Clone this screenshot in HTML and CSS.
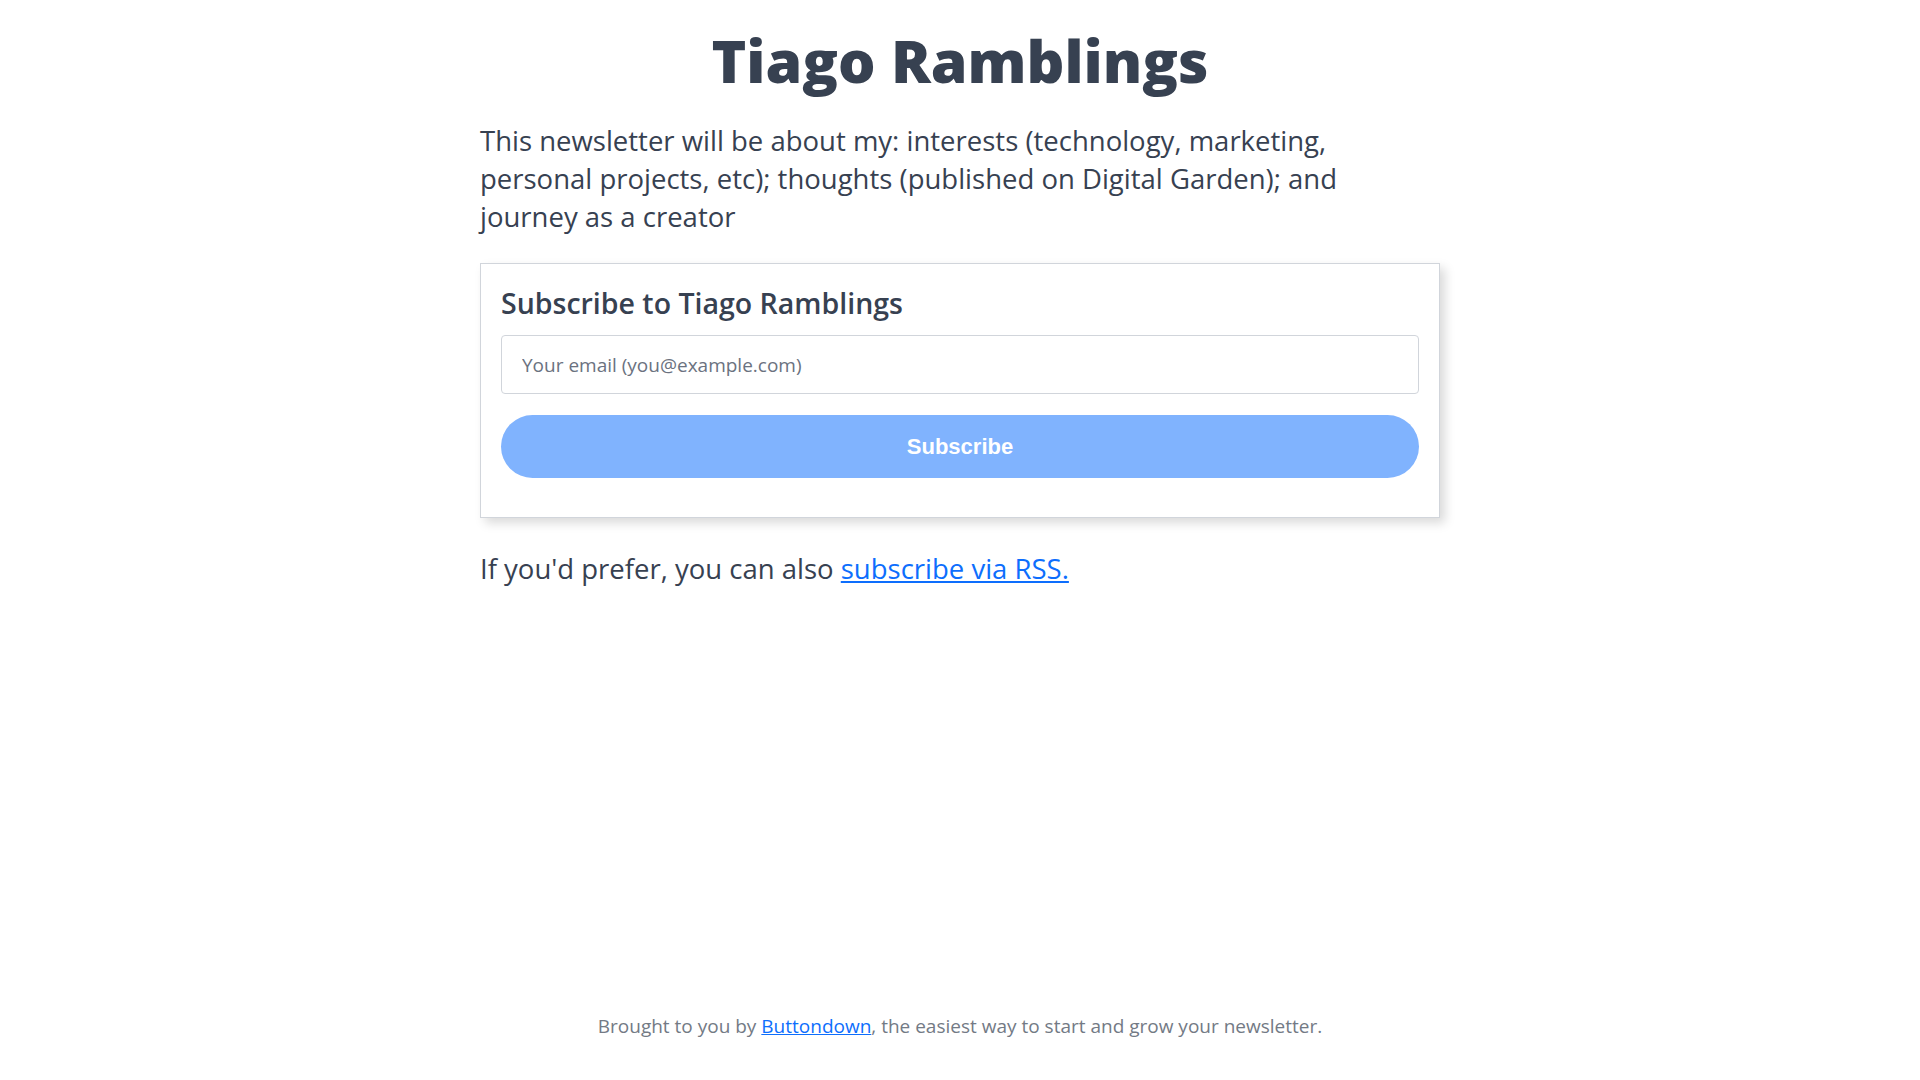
FILE: index.html
```html
<!DOCTYPE html>
<html lang="en">
<head>
    <meta charset="UTF-8">
    <meta name="viewport" content="width=device-width, initial-scale=1.0">
    <title>Tiago Ramblings</title>
    <link rel="stylesheet" href="styles.css">
</head>
<body>
    <main class="page">
        <h1 class="title">Tiago Ramblings</h1>
        <p class="description">This newsletter will be about my: interests (technology, marketing, personal projects, etc); thoughts (published on Digital Garden); and journey as a creator</p>

        <form class="subscribe-card" onsubmit="return false;">
            <h2 class="subscribe-title">Subscribe to Tiago Ramblings</h2>
            <input type="email" class="email-input" placeholder="Your email (you@example.com)">
            <button type="submit" class="subscribe-btn" disabled>Subscribe</button>
        </form>

        <p class="rss">If you'd prefer, you can also <a href="#">subscribe via RSS.</a></p>
    </main>

    <footer class="footer">
        Brought to you by <a href="#">Buttondown</a>, the easiest way to start and grow your newsletter.
    </footer>
</body>
</html>
```

FILE: styles.css
```css
* {
    box-sizing: border-box;
}
body {
    margin: 0;
    min-height: 100vh;
    display: flex;
    flex-direction: column;
    font-family: "Open Sans", "Noto Sans", sans-serif;
    color: #374151;
    background: #fff;
}
a {
    color: #0d6efd;
    text-decoration: underline;
}
.page {
    width: 960px;
    margin: 0 auto;
}
.title {
    margin: 27px 0 0;
    font-size: 59px;
    line-height: 67px;
    font-weight: 800;
    text-align: center;
}
.description {
    margin: 28px 0 0;
    max-width: 900px;
    font-size: 27.5px;
    line-height: 38px;
}
.subscribe-card {
    margin-top: 27px;
    padding: 24px 20px 39px;
    border: 1px solid #d1d5db;
    background: #fff;
    box-shadow: 5px 5px 10px rgba(0, 0, 0, 0.15);
    display: flex;
    flex-direction: column;
}
.subscribe-title {
    margin: 0 0 16px;
    font-size: 28.5px;
    line-height: 31px;
    font-weight: 600;
}
.email-input {
    height: 59px;
    padding: 0 20px;
    border: 1px solid #d1d5db;
    border-radius: 4px;
    font-family: "Open Sans", "Noto Sans", sans-serif;
    font-size: 19px;
    color: #374151;
}
.email-input::placeholder {
    color: #6b7280;
}
.subscribe-btn {
    margin-top: 21px;
    height: 63px;
    border: none;
    border-radius: 32px;
    background-color: #80b3fe;
    color: #fff;
    font-family: "Liberation Sans", Arial, sans-serif;
    font-size: 22px;
    font-weight: bold;
}
.rss {
    margin: 32px 0 0;
    font-size: 27.5px;
    line-height: 38px;
}
.footer {
    margin-top: auto;
    padding-bottom: 41px;
    text-align: center;
    font-size: 19px;
    line-height: 25px;
    color: #737a85;
}
```
